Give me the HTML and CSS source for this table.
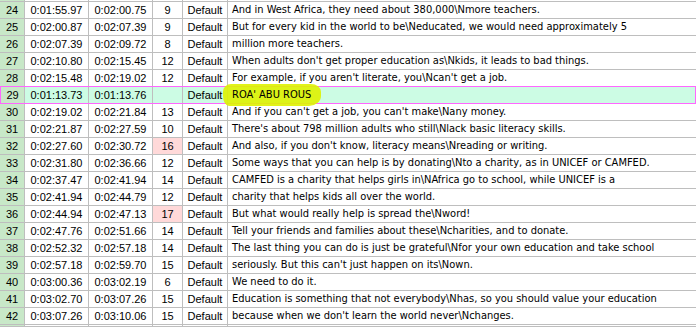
FILE: index.html
```html
<!DOCTYPE html>
<html>
<head>
<meta charset="utf-8">
<link rel="stylesheet" href="styles.css">
</head>
<body>
<div class="grid">
  <div class="row edge"><div class="c num"></div><div class="c"></div><div class="c"></div><div class="c"></div><div class="c"></div><div class="c txt"></div></div>
  <div class="row"><div class="c num">24</div><div class="c t">0:01:55.97</div><div class="c t">0:02:00.75</div><div class="c cps">9</div><div class="c sty">Default</div><div class="c txt">And in West Africa, they need about 380,000\Nmore teachers.</div></div>
  <div class="row"><div class="c num">25</div><div class="c t">0:02:00.87</div><div class="c t">0:02:07.39</div><div class="c cps">9</div><div class="c sty">Default</div><div class="c txt">But for every kid in the world to be\Neducated, we would need approximately 5</div></div>
  <div class="row"><div class="c num">26</div><div class="c t">0:02:07.39</div><div class="c t">0:02:09.72</div><div class="c cps">8</div><div class="c sty">Default</div><div class="c txt">million more teachers.</div></div>
  <div class="row"><div class="c num">27</div><div class="c t">0:02:10.80</div><div class="c t">0:02:15.45</div><div class="c cps">12</div><div class="c sty">Default</div><div class="c txt">When adults don't get proper education as\Nkids, it leads to bad things.</div></div>
  <div class="row"><div class="c num">28</div><div class="c t">0:02:15.48</div><div class="c t">0:02:19.02</div><div class="c cps">12</div><div class="c sty">Default</div><div class="c txt">For example, if you aren't literate, you\Ncan't get a job.</div></div>
  <div class="row active"><div class="c num">29</div><div class="c t">0:01:13.73</div><div class="c t">0:01:13.76</div><div class="c cps"></div><div class="c sty">Default</div><div class="c txt"><span class="marker"></span><span class="ink">ROA' ABU ROUS</span></div></div>
  <div class="row"><div class="c num">30</div><div class="c t">0:02:19.02</div><div class="c t">0:02:21.84</div><div class="c cps">13</div><div class="c sty">Default</div><div class="c txt">And if you can't get a job, you can't make\Nany money.</div></div>
  <div class="row"><div class="c num">31</div><div class="c t">0:02:21.87</div><div class="c t">0:02:27.59</div><div class="c cps">10</div><div class="c sty">Default</div><div class="c txt">There's about 798 million adults who still\Nlack basic literacy skills.</div></div>
  <div class="row"><div class="c num">32</div><div class="c t">0:02:27.60</div><div class="c t">0:02:30.72</div><div class="c cps warn">16</div><div class="c sty">Default</div><div class="c txt">And also, if you don't know, literacy means\Nreading or writing.</div></div>
  <div class="row"><div class="c num">33</div><div class="c t">0:02:31.80</div><div class="c t">0:02:36.66</div><div class="c cps">12</div><div class="c sty">Default</div><div class="c txt">Some ways that you can help is by donating\Nto a charity, as in UNICEF or CAMFED.</div></div>
  <div class="row"><div class="c num">34</div><div class="c t">0:02:37.47</div><div class="c t">0:02:41.94</div><div class="c cps">14</div><div class="c sty">Default</div><div class="c txt">CAMFED is a charity that helps girls in\NAfrica go to school, while UNICEF is a</div></div>
  <div class="row"><div class="c num">35</div><div class="c t">0:02:41.94</div><div class="c t">0:02:44.79</div><div class="c cps">12</div><div class="c sty">Default</div><div class="c txt">charity that helps kids all over the world.</div></div>
  <div class="row"><div class="c num">36</div><div class="c t">0:02:44.94</div><div class="c t">0:02:47.13</div><div class="c cps warn">17</div><div class="c sty">Default</div><div class="c txt">But what would really help is spread the\Nword!</div></div>
  <div class="row"><div class="c num">37</div><div class="c t">0:02:47.76</div><div class="c t">0:02:51.66</div><div class="c cps">14</div><div class="c sty">Default</div><div class="c txt">Tell your friends and families about these\Ncharities, and to donate.</div></div>
  <div class="row"><div class="c num">38</div><div class="c t">0:02:52.32</div><div class="c t">0:02:57.18</div><div class="c cps">14</div><div class="c sty">Default</div><div class="c txt">The last thing you can do is just be grateful\Nfor your own education and take school</div></div>
  <div class="row"><div class="c num">39</div><div class="c t">0:02:57.18</div><div class="c t">0:02:59.70</div><div class="c cps">15</div><div class="c sty">Default</div><div class="c txt">seriously. But this can't just happen on its\Nown.</div></div>
  <div class="row"><div class="c num">40</div><div class="c t">0:03:00.36</div><div class="c t">0:03:02.19</div><div class="c cps">6</div><div class="c sty">Default</div><div class="c txt">We need to do it.</div></div>
  <div class="row"><div class="c num">41</div><div class="c t">0:03:02.70</div><div class="c t">0:03:07.26</div><div class="c cps">15</div><div class="c sty">Default</div><div class="c txt">Education is something that not everybody\Nhas, so you should value your education</div></div>
  <div class="row"><div class="c num">42</div><div class="c t">0:03:07.26</div><div class="c t">0:03:10.06</div><div class="c cps">15</div><div class="c sty">Default</div><div class="c txt">because when we don't learn the world never\Nchanges.</div></div>
  <div class="row edge"><div class="c num"></div><div class="c"></div><div class="c"></div><div class="c"></div><div class="c"></div><div class="c txt"></div></div>
</div>
</body>
</html>
```

FILE: styles.css
```css
* { box-sizing: border-box; }
html, body { margin: 0; padding: 0; background: #fff; overflow: hidden; }
body {
  font-family: "Liberation Sans", Arial, sans-serif;
  font-size: 11px;
  color: #000;
  width: 696px;
  height: 327px;
}
.grid { position: relative; }
.row {
  display: grid;
  grid-template-columns: 25px 64px 64px 30px 45px 1fr;
  height: 17px;
  border-bottom: 1px solid #bebebe;
  line-height: 16px;
  white-space: nowrap;
}
.row.edge { height: 2px; overflow: hidden; }
.c {
  border-right: 1px solid #bebebe;
  overflow: hidden;
  text-align: center;
}
.c.txt {
  border-right: none;
  text-align: left;
  padding-left: 4px;
  font-family: "DejaVu Sans Condensed", "DejaVu Sans", sans-serif;
  font-stretch: condensed;
  font-size: 11px;
}
.num { background: #c8e8c8; }
.cps.warn { background: #ffd9d9; }
.row.active {
  position: relative;
  margin-top: -1px;
  height: 18px;
  border: 1px solid #ff66ff;
  background: #ccfce4;
  grid-template-columns: 24px 64px 64px 30px 45px 1fr;
}
.row.active .txt { overflow: visible; }
.marker {
  position: absolute;
  left: 222px;
  top: -3px;
  width: 98px;
  height: 22px;
  background: rgba(222, 242, 0, 0.9);
  border-radius: 8px 10px 12px 6px / 8px 8px 10px 10px;
}
.ink { position: relative; }
```
